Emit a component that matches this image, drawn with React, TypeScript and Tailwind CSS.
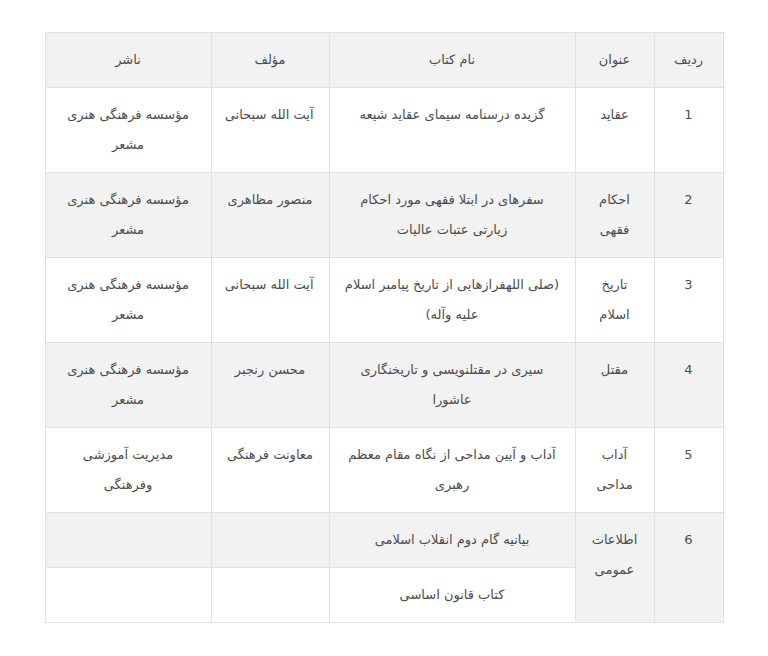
const rows: { id: string; title: string[]; book: string[]; author: string; publisher: string[] }[] = [
  {
    id: "1",
    title: ["عقاید"],
    book: ["گزیده درسنامه سیمای عقاید شیعه"],
    author: "آیت الله سبحانی",
    publisher: ["مؤسسه فرهنگی هنری", "مشعر"],
  },
  {
    id: "2",
    title: ["احکام", "فقهی"],
    book: ["سفرهای در ابتلا فقهی مورد احکام", "زیارتی عتبات عالیات"],
    author: "منصور مظاهری",
    publisher: ["مؤسسه فرهنگی هنری", "مشعر"],
  },
  {
    id: "3",
    title: ["تاریخ", "اسلام"],
    book: ["(صلی اللهفرازهایی از تاریخ پیامبر اسلام", "علیه وآله)"],
    author: "آیت الله سبحانی",
    publisher: ["مؤسسه فرهنگی هنری", "مشعر"],
  },
  {
    id: "4",
    title: ["مقتل"],
    book: ["سیری در مقتلنویسی و تاریخنگاری", "عاشورا"],
    author: "محسن رنجبر",
    publisher: ["مؤسسه فرهنگی هنری", "مشعر"],
  },
  {
    id: "5",
    title: ["آداب", "مداحی"],
    book: ["آداب و آیین مداحی از نگاه مقام معظم", "رهبری"],
    author: "معاونت فرهنگی",
    publisher: ["مدیریت آموزشی", "وفرهنگی"],
  },
];

const cell = "border border-[#e1e1e1] px-[15px] py-[12px] align-top text-center whitespace-nowrap";

function Lines({ lines }: { lines: string[] }) {
  return (
    <>
      {lines.map((l, i) => (
        <span key={i} className="block">
          {l}
        </span>
      ))}
    </>
  );
}

export default function App() {
  return (
    <div className="min-h-screen bg-white pt-[32px]">
      <table
        dir="rtl"
        className="mx-auto w-[678px] table-fixed border-collapse text-[13px] leading-[30px] text-[#4d4d4d]"
        style={{ fontFamily: '"DejaVu Sans", sans-serif' }}
      >
        <colgroup>
          <col className="w-[69px]" />
          <col className="w-[79px]" />
          <col className="w-[246px]" />
          <col className="w-[118px]" />
          <col className="w-[166px]" />
        </colgroup>
        <thead>
          <tr className="bg-[#f2f2f2]">
            <th className={`${cell} font-normal`}>ردیف</th>
            <th className={`${cell} font-normal`}>عنوان</th>
            <th className={`${cell} font-normal`}>نام کتاب</th>
            <th className={`${cell} font-normal`}>مؤلف</th>
            <th className={`${cell} font-normal`}>ناشر</th>
          </tr>
        </thead>
        <tbody>
          {rows.map((r, i) => (
            <tr key={r.id} className={i % 2 === 1 ? "bg-[#f2f2f2]" : "bg-white"}>
              <td className={cell}>{r.id}</td>
              <td className={cell}>
                <Lines lines={r.title} />
              </td>
              <td className={cell}>
                <Lines lines={r.book} />
              </td>
              <td className={cell}>{r.author}</td>
              <td className={cell}>
                <Lines lines={r.publisher} />
              </td>
            </tr>
          ))}
          <tr className="bg-[#f2f2f2]">
            <td className={cell} rowSpan={2}>
              6
            </td>
            <td className={cell} rowSpan={2}>
              <Lines lines={["اطلاعات", "عمومی"]} />
            </td>
            <td className={cell}>بیانیه گام دوم انقلاب اسلامی</td>
            <td className={cell}></td>
            <td className={cell}></td>
          </tr>
          <tr>
            <td className={`${cell} bg-white`}>کتاب قانون اساسی</td>
            <td className={`${cell} bg-white`}></td>
            <td className={`${cell} bg-white`}></td>
          </tr>
        </tbody>
      </table>
    </div>
  );
}
